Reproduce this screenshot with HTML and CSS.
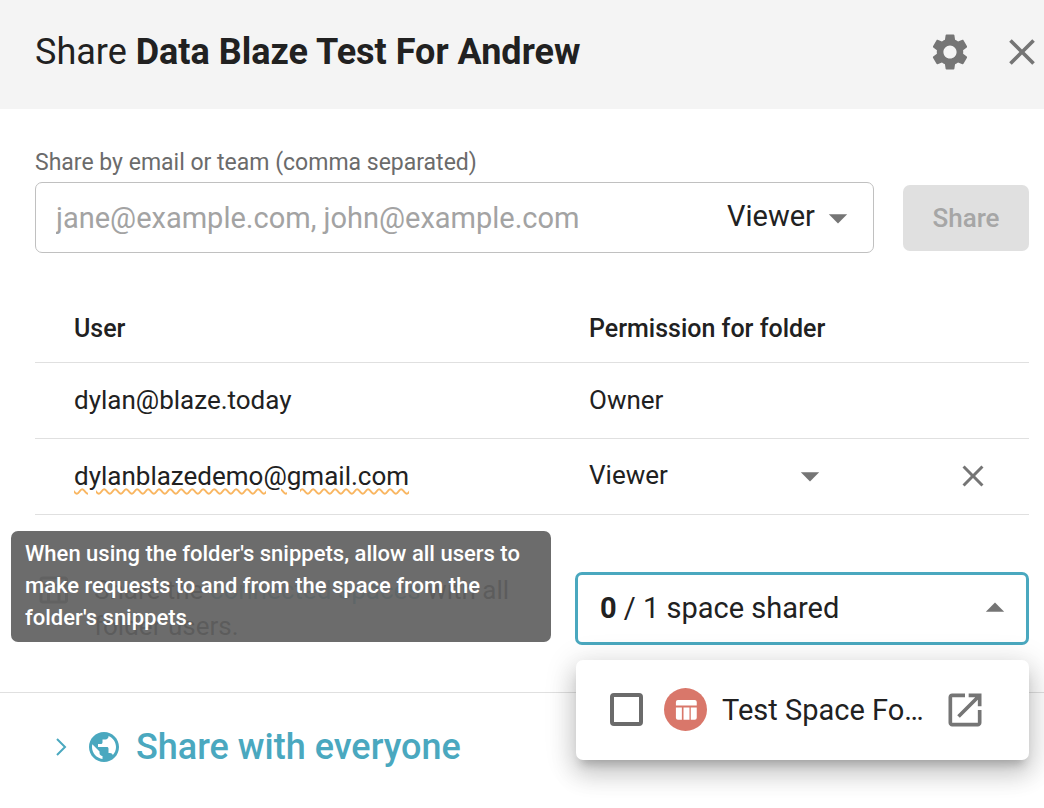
FILE: index.html
```html
<!DOCTYPE html>
<html lang="en">
<head>
    <meta charset="UTF-8">
    <meta name="viewport" content="width=device-width, initial-scale=1.0">
    <title>Share folder</title>
    <link rel="stylesheet" href="styles.css">
</head>
<body>
    <header class="header">
        <h1 class="title">Share <strong>Data Blaze Test For Andrew</strong></h1>
        <div class="header-actions">
            <button class="icon-btn" type="button" aria-label="Settings">
                <svg class="icon" viewBox="0 0 24 24"><path d="M19.14 12.94c.04-.3.06-.61.06-.94 0-.32-.02-.64-.07-.94l2.03-1.58c.18-.14.23-.41.12-.61l-1.92-3.32c-.12-.22-.37-.29-.59-.22l-2.39.96c-.5-.38-1.03-.7-1.62-.94l-.36-2.54c-.04-.24-.24-.41-.48-.41h-3.84c-.24 0-.43.17-.47.41l-.36 2.54c-.59.24-1.13.57-1.62.94l-2.39-.96c-.22-.08-.47 0-.59.22L2.74 8.87c-.12.21-.08.47.12.61l2.03 1.58c-.05.3-.09.63-.09.94s.02.64.07.94l-2.03 1.58c-.18.14-.23.41-.12.61l1.92 3.32c.12.22.37.29.59.22l2.39-.96c.5.38 1.03.7 1.62.94l.36 2.54c.05.24.24.41.48.41h3.84c.24 0 .44-.17.47-.41l.36-2.54c.59-.24 1.13-.56 1.62-.94l2.39.96c.22.08.47 0 .59-.22l1.92-3.32c.12-.22.07-.47-.12-.61l-2.01-1.58zM12 15.6c-1.98 0-3.6-1.62-3.6-3.6s1.62-3.6 3.6-3.6 3.6 1.62 3.6 3.6-1.62 3.6-3.6 3.6z"/></svg>
            </button>
            <button class="icon-btn" type="button" aria-label="Close">
                <svg class="icon" viewBox="0 0 24 24"><path d="M19 6.41L17.59 5 12 10.59 6.41 5 5 6.41 10.59 12 5 17.59 6.41 19 12 13.41 17.59 19 19 17.59 13.41 12z"/></svg>
            </button>
        </div>
    </header>

    <main class="content">
        <form class="share-form">
            <label class="share-label" for="emails">Share by email or team (comma separated)</label>
            <div class="share-row">
                <div class="share-field">
                    <input class="share-input" type="text" id="emails" placeholder="jane@example.com, john@example.com">
                    <div class="select-wrap">
                        <select class="select" aria-label="Permission">
                            <option>Viewer</option>
                            <option>Editor</option>
                            <option>Owner</option>
                        </select>
                        <svg class="icon select-arrow" viewBox="0 0 24 24"><path d="M7 10l5 5 5-5z"/></svg>
                    </div>
                </div>
                <button class="share-btn" type="submit" disabled>Share</button>
            </div>
        </form>

        <table class="users">
            <thead>
                <tr>
                    <th class="col-user">User</th>
                    <th class="col-permission">Permission for folder</th>
                    <th class="col-remove"></th>
                </tr>
            </thead>
            <tbody>
                <tr>
                    <td>dylan@blaze.today</td>
                    <td>Owner</td>
                    <td></td>
                </tr>
                <tr>
                    <td><span class="misspelled">dylanblazedemo@gmail.com</span></td>
                    <td>
                        <div class="select-wrap select-wrap-row">
                            <select class="select select-row" aria-label="Permission for dylanblazedemo@gmail.com">
                                <option>Viewer</option>
                                <option>Editor</option>
                                <option>Owner</option>
                            </select>
                            <svg class="icon select-arrow" viewBox="0 0 24 24"><path d="M7 10l5 5 5-5z"/></svg>
                        </div>
                    </td>
                    <td>
                        <button class="icon-btn remove-btn" type="button" aria-label="Remove user">
                            <svg class="icon icon-small" viewBox="0 0 24 24"><path d="M19 6.41L17.59 5 12 10.59 6.41 5 5 6.41 10.59 12 5 17.59 6.41 19 12 13.41 17.59 19 19 17.59 13.41 12z"/></svg>
                        </button>
                    </td>
                </tr>
            </tbody>
        </table>

        <section class="spaces">
            <div class="spaces-info">
                <svg class="icon icon-small" viewBox="0 0 24 24"><path d="M20 3H5c-1.1 0-2 .9-2 2v14c0 1.1.9 2 2 2h15c1.1 0 2-.9 2-2V5c0-1.1-.9-2-2-2zm0 2v3H5V5h15zm-5 14h-5v-9h5v9zM5 10h3v9H5v-9zm12 9v-9h3v9h-3z"/></svg>
                <p class="spaces-text">Share the <a class="link" href="#">connected spaces</a> with all folder users.</p>
                <div class="tooltip" role="tooltip">When using the folder's snippets, allow all users to make requests to and from the space from the folder's snippets.</div>
            </div>
            <div class="spaces-picker">
                <button class="spaces-btn" type="button" aria-expanded="true">
                    <span><strong>0</strong> / 1 space shared</span>
                    <svg class="icon" viewBox="0 0 24 24"><path d="M7 14l5-5 5 5z"/></svg>
                </button>
                <div class="menu">
                    <input class="checkbox" type="checkbox" id="space-1">
                    <svg class="badge" viewBox="0 0 130 130">
                        <circle cx="65" cy="65" r="65" fill="#d9776a"/>
                        <path fill="#fff" d="M42 36h51a6 6 0 0 1 6 6v11H36V42a6 6 0 0 1 6-6zM36 59h18v37H42a6 6 0 0 1-6-6zM59 59h18v37H59zM81 59h18v31a6 6 0 0 1-6 6H81z"/>
                    </svg>
                    <label class="menu-label" for="space-1">Test Space For Andrew</label>
                    <a class="menu-open" href="#" aria-label="Open space">
                        <svg class="icon" viewBox="0 0 24 24"><path d="M19 19H5V5h7V3H5c-1.11 0-2 .9-2 2v14c0 1.1.89 2 2 2h14c1.1 0 2-.9 2-2v-7h-2v7zM14 3v2h3.59l-9.83 9.83 1.41 1.41L19 6.41V10h2V3h-7z"/></svg>
                    </a>
                </div>
            </div>
        </section>
    </main>

    <footer class="footer">
        <button class="everyone" type="button">
            <svg class="chevron" viewBox="0 0 12 20"><path d="M2 2l8 8-8 8"/></svg>
            <svg class="globe" viewBox="2 2 20 20"><path d="M12 2C6.48 2 2 6.48 2 12s4.48 10 10 10 10-4.48 10-10S17.52 2 12 2zm-1 17.93c-3.95-.49-7-3.85-7-7.93 0-.62.08-1.21.21-1.79L9 15v1c0 1.1.9 2 2 2v1.93zm6.9-2.54c-.26-.81-1-1.39-1.9-1.39h-1v-3c0-.55-.45-1-1-1H8v-2h2c.55 0 1-.45 1-1V7h2c1.1 0 2-.9 2-2v-.41c2.93 1.19 5 4.06 5 7.41 0 2.08-.8 3.97-2.1 5.39z"/></svg>
            <span>Share with everyone</span>
        </button>
    </footer>
</body>
</html>
```
FILE: styles.css
```css
* {
    box-sizing: border-box;
}
body {
    font-family: Roboto, Arial, sans-serif;
    font-size: 26px;
    color: #212121;
    background-color: white;
    margin: 0;
}
button, input, select {
    font-family: inherit;
    color: inherit;
}
.header {
    display: flex;
    align-items: center;
    justify-content: space-between;
    background: #f4f4f4;
    height: 109px;
    padding: 0 0 6px 35px;
}
.title {
    font-size: 36px;
    font-weight: 400;
    margin: 0;
}
.header-actions {
    display: flex;
    gap: 28px;
}
.icon {
    display: block;
    width: 44px;
    height: 44px;
    fill: #757575;
    flex-shrink: 0;
}
.icon-small {
    width: 36px;
    height: 36px;
}
.icon-btn {
    background: none;
    border: none;
    padding: 0;
    cursor: pointer;
}
.content {
    padding: 40px 15px 0 35px;
}
.share-label {
    display: block;
    font-size: 23px;
    line-height: 28px;
    color: #6b6b6b;
    margin-bottom: 5px;
}
.share-row {
    display: flex;
    align-items: center;
    gap: 29px;
}
.share-field {
    display: flex;
    align-items: center;
    flex: 1;
    height: 71px;
    border: 1px solid #c0c0c0;
    border-radius: 7px;
    padding: 0 13px 0 20px;
}
.share-input {
    flex: 1;
    min-width: 0;
    font-size: 29px;
    border: none;
    outline: none;
    padding: 0;
    background: none;
}
.share-input::placeholder {
    color: #a3a3a3;
}
.share-btn {
    width: 126px;
    height: 66px;
    font-size: 26px;
    font-weight: 500;
    color: #a6a6a6;
    background: #e0e0e0;
    border: none;
    border-radius: 7px;
}
.select-wrap {
    display: grid;
    align-items: center;
    width: 133px;
}
.select-wrap-row {
    width: 243px;
}
.select {
    grid-area: 1 / 1;
    appearance: none;
    width: 100%;
    font-size: 29px;
    border: none;
    outline: none;
    padding: 0 0 4px;
    background: none;
}
.select-row {
    font-size: 26px;
    padding-bottom: 2px;
}
.select-arrow {
    grid-area: 1 / 1;
    justify-self: end;
    pointer-events: none;
}
.users {
    width: 100%;
    margin-top: 42px;
    border-collapse: collapse;
    table-layout: fixed;
    text-align: left;
}
.users th {
    height: 67px;
    font-size: 25px;
    font-weight: 500;
    padding: 0 0 0 39px;
    border-bottom: 1px solid #e0e0e0;
}
.users td {
    height: 76px;
    padding: 0 0 0 39px;
    border-bottom: 1px solid #e0e0e0;
}
.col-user {
    width: 515px;
}
.col-remove {
    width: 113px;
}
.misspelled {
    text-decoration: underline wavy #f9b661 2px;
    text-underline-offset: 3px;
}
.users .remove-btn {
    display: block;
}
.spaces {
    display: flex;
    align-items: flex-start;
    gap: 24px;
    padding-top: 57px;
    height: 177px;
}
.spaces-info {
    position: relative;
    display: flex;
    align-items: flex-start;
    gap: 23px;
    flex: 1;
}
.spaces-text {
    line-height: 36px;
    margin: 0;
}
.link {
    color: #4aa8bf;
    text-decoration: none;
}
.tooltip {
    position: absolute;
    left: -24px;
    top: -41px;
    width: 540px;
    padding: 7px 14px 8px;
    font-size: 22px;
    font-weight: 500;
    line-height: 32px;
    color: white;
    background: rgba(97, 97, 97, 0.93);
    border-radius: 7px;
}
.spaces-picker {
    position: relative;
    width: 454px;
}
.spaces-btn {
    display: flex;
    align-items: center;
    justify-content: space-between;
    width: 100%;
    height: 73px;
    font-size: 29px;
    background: white;
    border: 3px solid #4aa8bf;
    border-radius: 7px;
    padding: 0 9px 0 22px;
}
.menu {
    position: absolute;
    top: 88px;
    left: 1px;
    right: 0;
    display: flex;
    align-items: center;
    height: 100px;
    padding: 0 42px 0 34px;
    background: white;
    border-radius: 7px;
    box-shadow: 0 9px 10px -5px rgba(0, 0, 0, 0.2), 0 14px 24px 2px rgba(0, 0, 0, 0.14), 0 5px 30px 4px rgba(0, 0, 0, 0.12);
}
.checkbox {
    appearance: none;
    flex-shrink: 0;
    width: 33px;
    height: 33px;
    margin: 0 21px 0 0;
    border: 4px solid #6b6b6b;
    border-radius: 4px;
}
.badge {
    flex-shrink: 0;
    width: 43px;
    height: 43px;
    margin-right: 15px;
}
.menu-label {
    flex: 1;
    min-width: 0;
    font-size: 29px;
    overflow: hidden;
    white-space: nowrap;
    text-overflow: ellipsis;
}
.menu-open {
    margin-left: 16px;
}
.footer {
    border-top: 1px solid #e0e0e0;
    padding: 33px 35px;
}
.everyone {
    display: flex;
    align-items: center;
    font-size: 36px;
    font-weight: 500;
    color: #4aa8bf;
    background: none;
    border: none;
    padding: 0 0 0 20px;
    cursor: pointer;
}
.chevron {
    width: 12px;
    height: 20px;
    margin-right: 22px;
    fill: none;
    stroke: #4aa8bf;
    stroke-width: 2;
}
.globe {
    width: 30px;
    height: 30px;
    margin-right: 17px;
    fill: #4aa8bf;
}
```
